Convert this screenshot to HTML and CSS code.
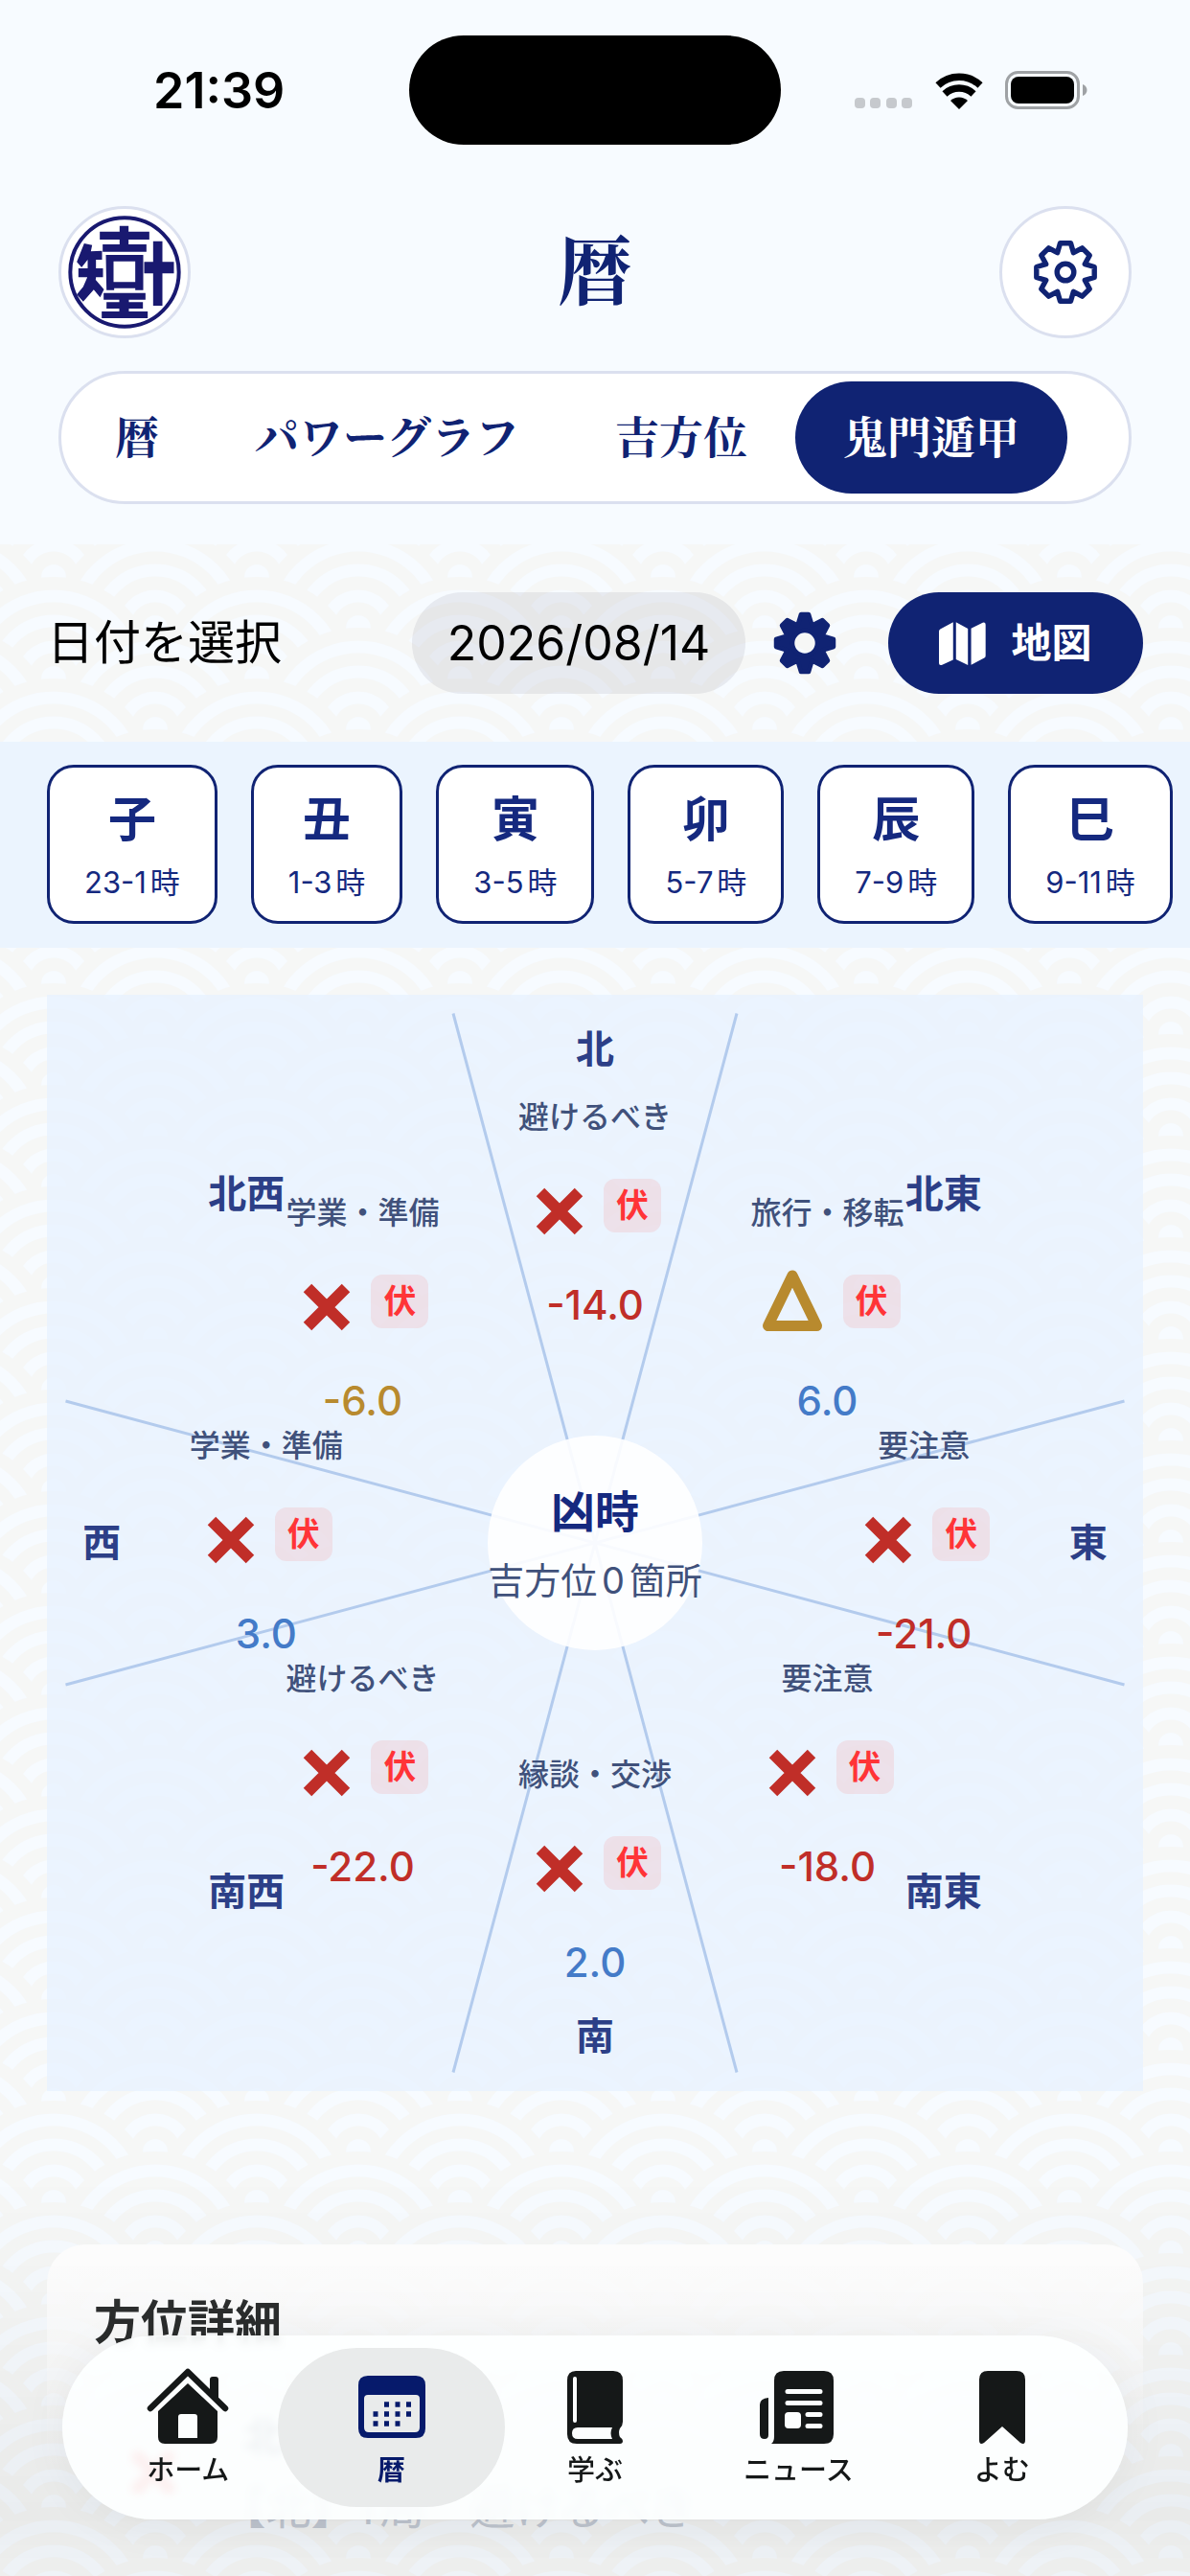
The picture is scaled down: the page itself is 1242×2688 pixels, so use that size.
FILE: index.html
```html
<!DOCTYPE html>
<html lang="ja">
<head>
<meta charset="utf-8">
<meta name="viewport" content="width=device-width, initial-scale=1">
<title>暦 - 鬼門遁甲</title>
<link rel="stylesheet" href="styles.css">
</head>
<body>
<svg class="defs" aria-hidden="true">
  <symbol id="cross" viewBox="0 0 50 50"><path d="M5 5L45 45M45 5L5 45" fill="none" stroke="currentColor" stroke-width="12"/></symbol>
  <symbol id="gear" viewBox="-34 -34 68 68"><path d="M-5.5-30.2H5.5L8.4-20.3 17.5-25.2 25.2-17.5 20.3-8.4 30.2-5.5V5.5L20.3 8.4 25.2 17.5 17.5 25.2 8.4 20.3 5.5 30.2H-5.5L-8.4 20.3-17.5 25.2-25.2 17.5-20.3 8.4-30.2 5.5V-5.5L-20.3-8.4-25.2-17.5-17.5-25.2-8.4-20.3ZM8.8 0A8.8 8.8 0 1 0-8.8 0 8.8 8.8 0 1 0 8.8 0Z" stroke="currentColor" stroke-width="5.4" stroke-linejoin="round"/></symbol>
  <symbol id="gear-fill" viewBox="-34 -34 68 68"><path d="M-4-30H4L7.600-18.400 18.400-24 24-18.400 18.400-7.600 30-4V4L18.400 7.600 24 18.400 18.400 24 7.600 18.400 4 30H-4L-7.600 18.400-18.400 24-24 18.400-18.400 7.600-30 4V-4L-18.400-7.600-24-18.400-18.400-24-7.600-18.400ZM13 0A13 13 0 1 0-13 0 13 13 0 1 0 13 0Z" fill="currentColor" fill-rule="evenodd" stroke="currentColor" stroke-width="4.5" stroke-linejoin="round"/></symbol>
</svg>

<header class="header">
  <div class="status">
    <time class="clock">21:39</time>
    <span class="island"></span>
    <svg class="signals" viewBox="0 0 246 44" aria-hidden="true">
      <g fill="#c6c9cd"><rect x="0" y="30" width="11" height="11" rx="4"/><rect x="16" y="30" width="11" height="11" rx="4"/><rect x="33" y="30" width="11" height="11" rx="4"/><rect x="49" y="30" width="11" height="11" rx="4"/></g>
      <path d="M109 42l-9-9a13 13 0 0 1 18 0z"/>
      <path d="M94 26a22 22 0 0 1 30 0M87 17a32 32 0 0 1 44 0" fill="none" stroke="#000" stroke-width="7.5"/>
      <rect x="158.500" y="3.500" width="75" height="37" rx="12" fill="none" stroke="#9fa2a5" stroke-width="3"/>
      <rect x="163" y="8" width="66" height="28" rx="8"/>
      <path d="M238 16c6 2 6 10 0 12z" fill="#9fa2a5"/>
    </svg>
  </div>
  <div class="titlebar">
    <button class="round" type="button" aria-label="プロフィール">
      <svg class="logo" viewBox="71.500 54 396 396" fill="#191970">
        <circle cx="269.500" cy="252" r="170" fill="#fff" stroke="#191970" stroke-width="12"/>
        <path d="M254 107h28v18h65v25h-65v15h56v23H201v-23h53v-15h-62v-25h62z"/>
        <path fill-rule="evenodd" d="M211 198h117v110h-25v-6h-66v6h-24zM235 218h68v65h-68z"/>
        <path d="M204 317h131v21h-52v8h44v20h-44v9h59v21H198v-21h55v-9h-40v-20h40v-8h-49z"/>
        <path d="M359 155h29v65h36v36h-36v101h-29V256h-28v-36h28z"/>
        <path d="M143 162l25 5-4 20 35-2v28h-19v27h22v28h-22l-1 8 26 30-12 25-20-24-33 37-20-22 20-24 13-30h-28v-28h29v-27l-19 24-15-17z"/>
      </svg>
    </button>
    <h1>暦</h1>
    <button class="round" type="button" aria-label="設定"><svg class="gear" fill="none"><use href="#gear"/></svg></button>
  </div>
  <nav class="tabs">
    <button type="button">暦</button>
    <button type="button">パワーグラフ</button>
    <button type="button">吉方位</button>
    <button type="button" class="active">鬼門遁甲</button>
  </nav>
</header>

<main>
  <div class="daterow">
    <label for="date">日付を選択</label>
    <input id="date" type="text" value="2026/08/14" readonly>
    <button class="plain" type="button" aria-label="日付設定"><svg class="gear-fill"><use href="#gear-fill"/></svg></button>
    <button class="map" type="button">
      <svg viewBox="607 1287 146 134" fill="#fff"><path d="M607 1316q0-5 4-7l40-21v117l-34 15q-10 3-10-5zM660 1288l37 20v113l-37-18zM707 1307l36-18q9-2 9 6v97q0 5-4 7l-41 21z"/></svg>
      地図
    </button>
  </div>

  <div class="hours">
    <button type="button"><b>子</b><span>23-1時</span></button>
    <button type="button"><b>丑</b><span>1-3時</span></button>
    <button type="button"><b>寅</b><span>3-5時</span></button>
    <button type="button"><b>卯</b><span>5-7時</span></button>
    <button type="button"><b>辰</b><span>7-9時</span></button>
    <button type="button"><b>巳</b><span>9-11時</span></button>
  </div>

  <section class="compass">
    <svg class="rays" viewBox="0 0 1144 1144" aria-hidden="true">
      <path d="M424 19.500L720 1124.500M720 19.500L424 1124.500M19.500 424L1124.500 720M19.500 720L1124.500 424" stroke="#b3cbed" stroke-width="3"/>
      <circle cx="572" cy="572" r="112" fill="#fff" fill-opacity=".9"/>
    </svg>
    <div class="center"><strong>凶時</strong><span>吉方位0箇所</span></div>

    <span class="dir d-n">北</span><span class="dir d-ne">北東</span><span class="dir d-e">東</span><span class="dir d-se">南東</span>
    <span class="dir d-s">南</span><span class="dir d-sw">南西</span><span class="dir d-w">西</span><span class="dir d-nw">北西</span>

    <div class="cell c-n"><span class="luck">避けるべき</span><div class="mark"><svg class="x"><use href="#cross"/></svg><em>伏</em></div><span class="score red">-14.0</span></div>
    <div class="cell c-ne"><span class="luck">旅行・移転</span><div class="mark"><svg class="tri" viewBox="0 0 78 68"><path d="M39 1L13.500 53.500H64.500Z" fill="none" stroke="#b88a2e" stroke-width="11" stroke-linejoin="round"/></svg><em>伏</em></div><span class="score blue">6.0</span></div>
    <div class="cell c-e"><span class="luck">要注意</span><div class="mark"><svg class="x"><use href="#cross"/></svg><em>伏</em></div><span class="score red">-21.0</span></div>
    <div class="cell c-se"><span class="luck">要注意</span><div class="mark"><svg class="x"><use href="#cross"/></svg><em>伏</em></div><span class="score red">-18.0</span></div>
    <div class="cell c-s"><span class="luck">縁談・交渉</span><div class="mark"><svg class="x"><use href="#cross"/></svg><em>伏</em></div><span class="score blue">2.0</span></div>
    <div class="cell c-sw"><span class="luck">避けるべき</span><div class="mark"><svg class="x"><use href="#cross"/></svg><em>伏</em></div><span class="score red">-22.0</span></div>
    <div class="cell c-w"><span class="luck">学業・準備</span><div class="mark"><svg class="x"><use href="#cross"/></svg><em>伏</em></div><span class="score blue">3.0</span></div>
    <div class="cell c-nw"><span class="luck">学業・準備</span><div class="mark"><svg class="x"><use href="#cross"/></svg><em>伏</em></div><span class="score gold">-6.0</span></div>
  </section>

  <section class="details">
    <h2>方位詳細</h2>
    <div class="detail">
      <svg class="x"><use href="#cross"/></svg>
      <div><strong>北</strong><p>【北】1局　避けるべき</p></div>
    </div>
  </section>
</main>

<div class="fade"></div>
<nav class="tabbar">
  <a href="#home"><svg viewBox="0 0 90 90"><path d="M6 47L45 9l39 38" fill="none" stroke="currentColor" stroke-width="6.500" stroke-linecap="round" stroke-linejoin="round"/><path d="M68 32V17q0-3 3-3h3q3 0 3 3v23zM45 21l31 29v27q0 7-7 7H21q-7 0-7-7V50zM35 56v22h20V56q0-3-3-3H38q-3 0-3 3z" fill="currentColor" fill-rule="evenodd"/></svg>ホーム</a>
  <a href="#koyomi" class="active"><svg viewBox="0 0 90 90"><path fill="currentColor" fill-rule="evenodd" d="M20 13h50q10 0 10 10v45q0 10-10 10H20q-10 0-10-10V23q0-10 10-10zM20 33q-4 0-4 4v30q0 5 5 5h48q5 0 5-5V37q0-4-4-4z"/><path d="M37 43h5M48.500 43h5M60 43h5M25.500 53h5M37 53h5M48.500 53h5M60 53h5M25.500 63h5M37 63h5M48.500 63h5" stroke="currentColor" stroke-width="5.500"/></svg>暦</a>
  <a href="#learn"><svg viewBox="0 0 90 90"><path fill="currentColor" fill-rule="evenodd" d="M25 8h39q10 0 10 10v43q0 4-3 7-2 4 0 9 3 2 3 4 0 3-3 3H26q-10 0-10-10V18q0-10 9-10zM24 14q-2 0-2 2v44q0 2 2 2t2-2V16q0-2-2-2zM27 67q-6 0-6 6t6 6h36q-3-6 0-12z"/></svg>学ぶ</a>
  <a href="#news"><svg viewBox="0 0 90 90"><path fill="currentColor" fill-rule="evenodd" d="M30 8h42q10 0 10 10v56q0 10-10 10H17q3-2 3-8V18q0-10 10-10zM34 27a2.500 2.500 0 0 0 0 5h34a2.500 2.500 0 0 0 0-5zM34 39a2.500 2.500 0 0 0 0 5h34a2.500 2.500 0 0 0 0-5zM35 51q-4 0-4 4v9q0 4 4 4h9q4 0 4-4v-9q0-4-4-4zM55 51a2 2 0 0 0 0 5h13a2 2 0 0 0 0-5zM55 63a2 2 0 0 0 0 5h13a2 2 0 0 0 0-5zM14 36v39q0 4-4 4-5 0-5-5V43q0-6 9-7z"/></svg>ニュース</a>
  <a href="#read"><svg viewBox="0 0 90 90"><path fill="currentColor" d="M30 8h30q9 0 9 9v63q0 6-5 3L45 66 26 83q-5 3-5-3V17q0-9 9-9z"/></svg>よむ</a>
</nav>
</body>
</html>
```
FILE: styles.css
```css
:root {
  --navy: #102373;
  --paper: #f7fbff;
  --line: #dbe0ef;
  --sans: Inter, "Noto Sans CJK JP", sans-serif;
  --mincho: "Hiragino Mincho ProN", "Noto Serif CJK JP", "Noto Serif JP", "Noto Sans CJK JP", serif;
}

* { box-sizing: border-box; }

body {
  margin: 0;
  min-height: 100vh;
  display: flex;
  flex-direction: column;
  background: var(--paper);
  color: #000;
  font-family: var(--sans);
  text-autospace: normal;
  overflow-x: hidden;
}

button, input {
  margin: 0;
  border: 0;
  padding: 0;
  background: none;
  font: inherit;
  color: inherit;
}

.defs { position: absolute; width: 0; height: 0; }

/* header */
.header { padding: 0 61px 42px; }

.status {
  height: 214px;
  padding: 37px 43px 0;
  display: grid;
  grid-template-columns: 1fr 388px 1fr;
  align-items: start;
}
.clock {
  line-height: 116px;
  padding-left: 56px;
  font-size: 52px;
  font-weight: 600;
}
.island { height: 114px; border-radius: 57px; background: #000; }
.signals { width: 246px; height: 44px; margin-top: 35px; justify-self: end; }

.titlebar {
  display: flex;
  align-items: center;
  justify-content: space-between;
  height: 139px;
  color: var(--navy);
}
.titlebar h1 {
  margin: 0;
  padding-bottom: 12px;
  font: 700 78px/100px var(--mincho);
}
.round {
  width: 138px;
  height: 138px;
  display: grid;
  place-items: center;
  border: 3px solid var(--line);
  border-radius: 50%;
  background: #fff;
  color: var(--navy);
}
.logo { width: 132px; height: 132px; }
.gear { width: 68px; height: 68px; }

.tabs {
  display: flex;
  margin-top: 34px;
  height: 139px;
  padding: 8px 6px;
  border: 3px solid var(--line);
  border-radius: 70px;
  background: #fff;
}
.tabs button {
  padding: 0 50px 8px;
  border-radius: 59px;
  color: var(--navy);
  font: 700 46px/100px var(--mincho);
  white-space: nowrap;
}
.tabs .active { background: var(--navy); color: #fff; }

/* seigaiha wave paper behind the content */
main {
  flex: 1;
  background: url("data:image/svg+xml,%3Csvg xmlns='http://www.w3.org/2000/svg' xmlns:xlink='http://www.w3.org/1999/xlink' width='212' height='106'%3E%3Cdefs%3E%3Cg id='w'%3E%3Ccircle r='106' fill='%23f6f7f6'/%3E%3Ccircle r='86' fill='none' stroke='%23f7fbff' stroke-width='13'/%3E%3Ccircle r='60' fill='none' stroke='%23f7fbff' stroke-width='13'/%3E%3Ccircle r='33' fill='none' stroke='%23f7fbff' stroke-width='13'/%3E%3Ccircle r='13' fill='%23f7fbff'/%3E%3C/g%3E%3C/defs%3E%3Cuse xlink:href='%23w' x='106' y='0'/%3E%3Cuse xlink:href='%23w' x='0' y='53'/%3E%3Cuse xlink:href='%23w' x='212' y='53'/%3E%3Cuse xlink:href='%23w' x='106' y='106'/%3E%3Cuse xlink:href='%23w' x='0' y='159'/%3E%3Cuse xlink:href='%23w' x='212' y='159'/%3E%3C/svg%3E") -50px 34px;
}

.daterow {
  display: flex;
  align-items: center;
  padding: 50px 49px;
}
.daterow label { flex: 1; font-size: 49px; line-height: 60px; white-space: nowrap; }
.daterow input {
  width: 348px;
  height: 106px;
  border-radius: 53px;
  background: rgba(118, 118, 128, .12);
  font-size: 50px;
  text-align: center;
}
.plain { margin: 0 53px 0 28px; color: var(--navy); display: grid; }
.gear-fill { width: 68px; height: 68px; }
.map {
  width: 266px;
  height: 106px;
  border-radius: 53px;
  background: var(--navy);
  color: #fff;
  display: flex;
  align-items: center;
  justify-content: center;
  gap: 26px;
  font-size: 42px;
  line-height: 60px;
  font-weight: 700;
}
.map svg { width: 49px; height: 45px; }

.hours {
  display: flex;
  gap: 35px;
  padding: 24px 49px 25px;
  background: #ebf4fe;
  overflow: hidden;
}
.hours button {
  flex: none;
  height: 166px;
  padding: 4px 36px 0;
  border: 3px solid var(--navy);
  border-radius: 28px;
  background: #fff;
  color: #15297f;
  display: flex;
  flex-direction: column;
  align-items: center;
  justify-content: center;
  gap: 12px;
}
.hours b { font-size: 50px; line-height: 64px; }
.hours span { font-size: 31px; line-height: 44px; }

/* compass */
.compass {
  position: relative;
  margin: 49px 49px 0;
  aspect-ratio: 1;
  background: rgba(231, 241, 255, .75);
}
.rays { display: block; width: 100%; height: 100%; }
.center, .dir, .cell {
  position: absolute;
  transform: translate(-50%, -50%);
  white-space: nowrap;
}
.center {
  left: 50%;
  top: 50%;
  padding-top: 6px;
  display: grid;
  justify-items: center;
  gap: 12px;
}
.center strong { font-size: 46px; line-height: 60px; color: #15297f; }
.center span { font-size: 38px; line-height: 60px; color: #40517b; }

.dir { font-size: 40px; line-height: 56px; font-weight: 700; color: #2c3f87; }
.d-n { left: 50%; top: 5%; }
.d-ne { left: 81.8%; top: 18.2%; }
.d-e { left: 95%; top: 50%; }
.d-se { left: 81.8%; top: 81.8%; }
.d-s { left: 50%; top: 95%; }
.d-sw { left: 18.2%; top: 81.8%; }
.d-w { left: 5%; top: 50%; }
.d-nw { left: 18.2%; top: 18.2%; }

.cell {
  display: flex;
  flex-direction: column;
  align-items: center;
  gap: 40px;
  padding-bottom: 6px;
}
.c-n { left: 50%; top: 20%; }
.c-ne { left: 71.2%; top: 28.8%; }
.c-e { left: 80%; top: 50%; }
.c-se { left: 71.2%; top: 71.2%; }
.c-s { left: 50%; top: 80%; }
.c-sw { left: 28.8%; top: 71.2%; }
.c-w { left: 20%; top: 50%; }
.c-nw { left: 28.8%; top: 28.8%; }

.luck { font-size: 32px; line-height: 48px; font-weight: 500; color: #40517b; }
.mark { display: flex; gap: 14px; height: 68px; }
.x { width: 50px; height: 50px; color: #c02e28; }
.mark .x { margin: 9px 7px; }
.tri { width: 78px; height: 68px; overflow: visible; }
.mark em {
  width: 60px;
  height: 56px;
  border-radius: 12px;
  background: rgba(255, 59, 48, .1);
  color: #ff3437;
  font: 700 34px/56px var(--sans);
  text-align: center;
}
.score { font-size: 42px; line-height: 48px; font-weight: 500; }
.red { color: #c02e28; }
.blue { color: #447bc8; }
.gold { color: #b88a2e; }

/* details card running under the tab bar */
.details {
  margin: 160px 49px 0;
  padding: 49px 49px 48px;
  border-radius: 40px 40px 0 0;
  background: linear-gradient(#fff 20px, rgba(255, 255, 255, .6) 120px, rgba(255, 255, 255, 0) 240px);
}
.details h2 { margin: 0; font-size: 49px; line-height: 66px; color: #2c2e2e; }
.detail { display: flex; gap: 69px; margin-top: 56px; padding-left: 37px; }
.detail .x { margin-top: 42px; color: #ff4040; }
.detail strong { display: block; font-size: 42px; line-height: 60px; color: #5d6880; }
.detail p {
  margin: 14px 0 0;
  font-size: 47px;
  line-height: 60px;
  color: #c6ccd6;
  white-space: nowrap;
  text-spacing-trim: trim-start;
}

.fade {
  position: fixed;
  left: 0;
  right: 0;
  bottom: 0;
  height: 420px;
  background: linear-gradient(rgba(0, 0, 0, 0), rgba(0, 0, 0, .05) 85%, rgba(0, 0, 0, .03));
  pointer-events: none;
}
.tabbar {
  position: fixed;
  left: 65px;
  right: 65px;
  bottom: 59px;
  height: 192px;
  padding: 13px 25px;
  display: grid;
  grid-template-columns: repeat(5, 1fr);
  border-radius: 96px;
  background: rgba(253, 255, 255, .92);
  backdrop-filter: blur(4px);
  box-shadow: 0 4px 50px rgba(0, 0, 0, .05);
}
.tabbar a {
  display: flex;
  flex-direction: column;
  align-items: center;
  gap: 2px;
  margin: 0 -12px;
  padding-top: 16px;
  border-radius: 83px;
  color: #151818;
  font-size: 29px;
  line-height: 40px;
  font-weight: 500;
  text-decoration: none;
}
.tabbar svg { width: 90px; height: 90px; }
.tabbar .active { background: #e9ebeb; color: #061a6b; font-weight: 700; }
```
